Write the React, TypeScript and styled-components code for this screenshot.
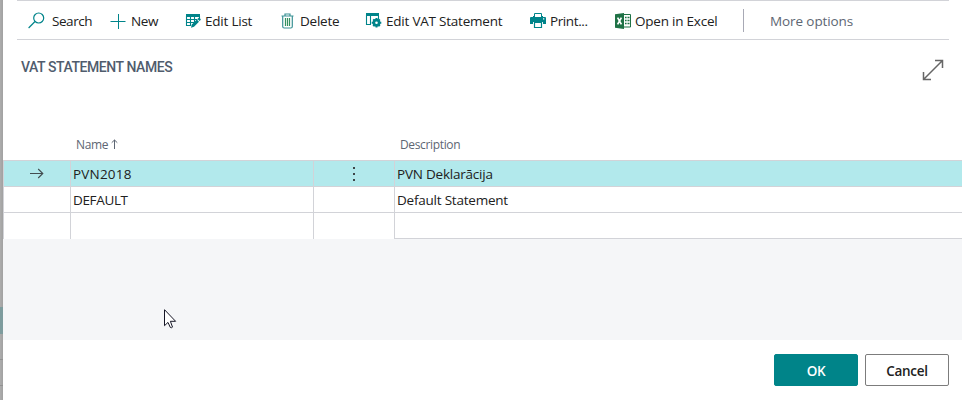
import React from 'react';
import styled, { createGlobalStyle } from 'styled-components';

const GlobalStyle = createGlobalStyle`
  * { box-sizing: border-box; }
  body { margin: 0; background: #fff; overflow: hidden; }
  svg { display: block; flex: none; }
`;

const Screen = styled.div`
  display: flex;
  width: 962px;
  height: 400px;
  overflow: hidden;
  font-family: 'Open Sans', 'Noto Sans', sans-serif;
  font-size: 13.5px;
  color: #212121;
`;

const Backdrop = styled.div`
  width: 3px;
  flex: none;
  background: linear-gradient(90deg, #adadad, #a1a1a1);
`;

const BackdropMark = styled.div<{ $top: number; $height: number; $color: string }>`
  margin-top: ${p => p.$top}px;
  height: ${p => p.$height}px;
  background: ${p => p.$color};
`;

const Dialog = styled.main`
  display: flex;
  flex-direction: column;
  flex: 1;
  min-width: 0;
  background: #fff;
`;

const Toolbar = styled.nav`
  display: grid;
  grid-template-columns: 82px 75px 96px 84px 165px 84px 129px 27px 1fr;
  align-items: center;
  height: 40px;
  flex: none;
  margin: 0 13px 0 14px;
  padding: 1px 0 0 11px;
  border-top: 1px solid #d2d3d8;
  border-bottom: 1px solid #d2d3d8;
`;

const Action = styled.button<{ $muted?: boolean; $gap: number }>`
  display: flex;
  align-items: center;
  gap: ${p => p.$gap}px;
  padding: 0;
  border: 0;
  background: none;
  font: inherit;
  color: ${p => (p.$muted ? '#5d6673' : '#212121')};
  white-space: nowrap;
`;

const Label = styled.span<{ $spacing?: number }>`
  line-height: 20px;
  letter-spacing: ${p => p.$spacing ?? -0.22}px;
`;

const Divider = styled.div`
  width: 1px;
  height: 23px;
  background: #a8a9b5;
`;

const Heading = styled.header`
  display: flex;
  justify-content: space-between;
  height: 95px;
  flex: none;
  padding: 17px 18px 0 18px;
  svg { margin-top: 2px; }
`;

const Title = styled.h1`
  margin: 0;
  font: 500 14px/20px Roboto, sans-serif;
  color: #505c6d;
  letter-spacing: -0.43px;
`;

const columns = '67px 243px 81px 1fr';

const HeaderRow = styled.div`
  display: grid;
  grid-template-columns: ${columns};
  height: 25px;
  flex: none;
  font-size: 12px;
  line-height: 20px;
  color: #5d6673;
`;

const HeaderCell = styled.div`
  display: flex;
  gap: 3px;
  padding-left: 6px;
  letter-spacing: -0.35px;
  svg { margin-top: 4px; }
`;

const Row = styled.div<{ $selected?: boolean; $last?: boolean }>`
  display: grid;
  grid-template-columns: ${columns};
  height: ${p => (p.$last ? 27 : 26)}px;
  flex: none;
  background: ${p => (p.$selected ? '#b2e9ec' : '#fff')};
`;

const Cell = styled.div<{ $center?: boolean; $closed?: boolean }>`
  display: flex;
  align-items: center;
  justify-content: ${p => (p.$center ? 'center' : 'flex-start')};
  padding-left: ${p => (p.$center ? 0 : 2)}px;
  border-left: 1px solid #d2d3d8;
  border-top: 1px solid #d2d3d8;
  border-bottom: ${p => (p.$closed ? '1px solid #d2d3d8' : '0')};
`;

const EmptyArea = styled.div`
  height: 101px;
  flex: none;
  background: #f5f6f8;
  padding: 70px 0 0 161px;
`;

const Footer = styled.footer`
  display: flex;
  justify-content: flex-end;
  gap: 7px;
  padding: 14px 13px 0 0;
`;

const Button = styled.button<{ $primary?: boolean }>`
  width: 84px;
  height: 32px;
  padding: 2px 0 0;
  border: 1px solid ${p => (p.$primary ? '#008489' : '#7c7c7c')};
  border-radius: 2px;
  background: ${p => (p.$primary ? '#008489' : '#fff')};
  color: ${p => (p.$primary ? '#fff' : '#212121')};
  font: 600 13.5px/20px 'Open Sans', sans-serif;
  letter-spacing: -0.25px;
`;

const teal = '#00848a';

const SearchIcon = () => (
  <svg width="17" height="17" viewBox="0 0 17 17" fill="none" stroke={teal} strokeWidth="1.2">
    <circle cx="10.7" cy="6" r="5" />
    <path d="M7 9.5.6 16" />
  </svg>
);

const PlusIcon = () => (
  <svg width="16" height="16" viewBox="0 0 16 16" stroke={teal}>
    <path d="M.5 8.5h15M8.5 1v15" />
  </svg>
);

const EditListIcon = () => (
  <svg width="16" height="15" viewBox="0 0 16 15">
    <path fill={teal} d="M1 1h14v3H1z" />
    <path fill="none" stroke={teal} strokeWidth="1.1" d="M1.5 3v9.5h5M1.5 6.5h13M1.5 9.5H9M5.5 3v9.5M9.5 3v6M14.5 3v3" />
    <path stroke="#fff" strokeWidth="3.8" d="m7 14.5 7.5-7.5" />
    <path fill={teal} d="m6 14.7.8-3.1 5-5L14 8.8l-5 5zM12.4 6l1.1-1.1q.5-.4 1 0l1.1 1.1q.4.5 0 1l-1 1.1z" />
  </svg>
);

const DeleteIcon = () => (
  <svg width="13" height="16" viewBox="0 0 13 16" fill="none">
    <path stroke="#3b9295" strokeWidth="1.2" d="M.5 3h12M4 2.5V1h5v1.5M1.7 3.5v10q0 1.5 1.5 1.5h6.6q1.5 0 1.5-1.5v-10" />
    <path stroke="#369060" strokeWidth="1.2" d="M4.5 5V13M6.5 5V13M8.5 5V13" />
  </svg>
);

const StatementIcon = () => (
  <svg width="17" height="15" viewBox="0 0 17 15">
    <path fill={teal} d="M1 0h13v3H1z" />
    <path fill="none" stroke={teal} strokeWidth="1.1" d="M1.5 2v9.5H6M5.5 3v8.5M13.5 3v3" />
    <circle cx="11.5" cy="9.7" r="2.6" fill="none" stroke={teal} strokeWidth="2.6" />
    <path
      stroke={teal}
      strokeWidth="2"
      d="M11.5 4.9v2.4M11.5 12.1v2.4M6.7 9.7h2.4M13.9 9.7h2.4M8.2 6.4l1.7 1.7M13.1 11.3l1.7 1.7M8.2 13l1.7-1.7M13.1 8.1l1.7-1.7"
    />
  </svg>
);

const PrintIcon = () => (
  <svg width="16" height="15" viewBox="0 0 16 15">
    <path fill="none" stroke={teal} d="M4.5 4V.5h7V4" />
    <path fill={teal} d="M1 4h2V3h1v1h8V3h1v1h2q1 0 1 1v6h-3V9H3v2H0V5q0-1 1-1z" />
    <path fill="#fff" d="M13 5.2h1.3v1.2H13z" />
    <path fill="#fff" stroke={teal} strokeWidth="1.2" d="M4.5 9.5h7v5h-7z" />
  </svg>
);

const ExcelIcon = () => (
  <svg width="17" height="16" viewBox="0 0 17 16">
    <path fill="#1f7246" d="M1 1.2 10 0v16L1 14.8z" />
    <path fill="none" stroke="#1f7246" d="M10 1.5h6.5v12.5H10" />
    <path stroke="#1f7246" strokeWidth="1.3" d="M11 4.5h1.6M13.5 4.5h2M11 7.5h1.6M13.5 7.5h2M11 10.5h1.6M13.5 10.5h2" />
    <path stroke="#fff" strokeWidth="1.7" d="m3.6 4.7 3.8 6.6M7.4 4.7l-3.8 6.6" />
  </svg>
);

const ExpandIcon = () => (
  <svg width="22" height="22" viewBox="0 0 22 22" fill="none" stroke="#666" strokeWidth="1.5">
    <path d="M1.5 20.5 20.5 1.5M13 1.5h7.5V9M1.5 13v7.5H9" />
  </svg>
);

const SortIcon = () => (
  <svg width="7" height="10" viewBox="0 0 7 10" fill="none" stroke="#5d6673">
    <path d="M3.5 10V1M.7 3.7 3.5 1l2.8 2.7" />
  </svg>
);

const RowArrow = () => (
  <svg width="15" height="11" viewBox="0 0 15 11" fill="none" stroke="#424d50" strokeWidth="1.1">
    <path d="M0 5.5h12.5M8.2 1l4.6 4.5L8.2 10" />
  </svg>
);

const MoreIcon = () => (
  <svg width="2" height="14" viewBox="0 0 2 14" fill="#3d4548">
    <path d="M0 0h2v2H0zM0 6h2v2H0zM0 12h2v2H0z" />
  </svg>
);

const PointerIcon = () => (
  <svg width="13" height="20" viewBox="0 0 13 20">
    <path fill="#fff" stroke="#151525" d="M.5.7v16L4 13.4l2.3 5q1 .9 2.2-.3L6.4 12.3h5.2z" />
  </svg>
);

export default function App() {
  return (
    <Screen>
      <GlobalStyle />
      <Backdrop>
        <BackdropMark $top={307} $height={27} $color="#7e9c9e" />
        <BackdropMark $top={25} $height={1} $color="#929292" />
        <BackdropMark $top={25} $height={1} $color="#929292" />
      </Backdrop>
      <Dialog>
        <Toolbar>
          <Action $gap={7}><SearchIcon /><Label $spacing={-0.45}>Search</Label></Action>
          <Action $gap={5}><PlusIcon /><Label $spacing={-0.35}>New</Label></Action>
          <Action $gap={4}><EditListIcon /><Label>Edit List</Label></Action>
          <Action $gap={6}><DeleteIcon /><Label>Delete</Label></Action>
          <Action $gap={4}><StatementIcon /><Label>Edit VAT Statement</Label></Action>
          <Action $gap={4}><PrintIcon /><Label $spacing={-0.4}>Print...</Label></Action>
          <Action $gap={4}><ExcelIcon /><Label>Open in Excel</Label></Action>
          <Divider />
          <Action $muted $gap={0}><Label $spacing={-0.1}>More options</Label></Action>
        </Toolbar>
        <Heading>
          <Title>VAT STATEMENT NAMES</Title>
          <ExpandIcon />
        </Heading>
        <HeaderRow>
          <div />
          <HeaderCell>Name<SortIcon /></HeaderCell>
          <div />
          <HeaderCell>Description</HeaderCell>
        </HeaderRow>
        <Row $selected>
          <Cell $center><RowArrow /></Cell>
          <Cell><Label $spacing={0.2}>PVN2018</Label></Cell>
          <Cell $center><MoreIcon /></Cell>
          <Cell><Label>PVN Deklarācija</Label></Cell>
        </Row>
        <Row>
          <Cell />
          <Cell><Label $spacing={-0.35}>DEFAULT</Label></Cell>
          <Cell />
          <Cell><Label>Default Statement</Label></Cell>
        </Row>
        <Row $last>
          <Cell />
          <Cell />
          <Cell />
          <Cell $closed />
        </Row>
        <EmptyArea><PointerIcon /></EmptyArea>
        <Footer>
          <Button $primary>OK</Button>
          <Button>Cancel</Button>
        </Footer>
      </Dialog>
    </Screen>
  );
}
